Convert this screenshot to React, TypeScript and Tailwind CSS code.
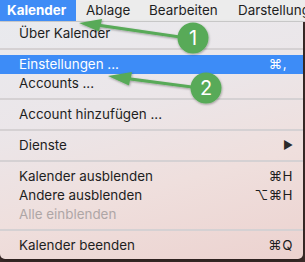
import React from "react";

type Item =
  | { kind: "item"; label: string; shortcut?: string; active?: boolean; disabled?: boolean; submenu?: boolean }
  | { kind: "sep" };

const items: Item[] = [
  { kind: "item", label: "Über Kalender" },
  { kind: "sep" },
  { kind: "item", label: "Einstellungen ...", shortcut: "⌘,", active: true },
  { kind: "item", label: "Accounts ..." },
  { kind: "sep" },
  { kind: "item", label: "Account hinzufügen ..." },
  { kind: "sep" },
  { kind: "item", label: "Dienste", submenu: true },
  { kind: "sep" },
  { kind: "item", label: "Kalender ausblenden", shortcut: "⌘H" },
  { kind: "item", label: "Andere ausblenden", shortcut: "⌥⌘H" },
  { kind: "item", label: "Alle einblenden", disabled: true },
  { kind: "sep" },
  { kind: "item", label: "Kalender beenden", shortcut: "⌘Q" },
];

export default function App() {
  return (
    <div
      className="relative w-[305px] h-[262px] overflow-hidden bg-[#3d2c2a] text-[13.4px] text-[#1e1e1e]"
      style={{ fontFamily: "Inter, 'Liberation Sans', sans-serif" }}
    >
      {/* Menu bar */}
      <div className="flex h-[22px] items-center overflow-hidden bg-[#ececec] border-b border-[#cfcfcf] whitespace-nowrap">
        <div className="flex h-full w-[76px] shrink-0 items-center bg-[#3f8cf6] pl-[7px] font-bold text-white">Kalender</div>
        <div className="w-[73px] shrink-0 pl-[10px]">Ablage</div>
        <div className="w-[89px] shrink-0">Bearbeiten</div>
        <div className="shrink-0">Darstellung</div>
      </div>

      {/* Dropdown */}
      <div className="w-[303px] h-[237px] rounded-b-[5px] bg-[linear-gradient(165deg,#e9eaee_0%,#ebe6e9_35%,#efdfdd_65%,#ecd2cf_100%)] pt-[2px] pb-[3px] shadow-[0_2px_4px_rgba(0,0,0,0.3)]">
        {items.map((it, i) =>
          it.kind === "sep" ? (
            <div key={i} className="flex h-[12px] items-center">
              <div className="h-[2px] w-full bg-[#d5d1d3]" />
            </div>
          ) : (
            <div
              key={i}
              className={
                "flex h-[19px] items-center justify-between pl-[19px] pr-[10px] " +
                (it.active ? "bg-[#3d8cf7] text-white " : "") +
                (it.disabled ? "text-[#aea6a6]" : "")
              }
            >
              <span>{it.label}</span>
              {it.shortcut && (
                <span className={"tracking-[0.5px] " + (it.active ? "mr-[6px]" : "")}>{it.shortcut}</span>
              )}
              {it.submenu && <span className="text-[11px] text-[#2a2a2a]">▶</span>}
            </div>
          )
        )}
      </div>

      {/* Annotation arrows */}
      <svg className="absolute left-0 top-0" width="305" height="262" viewBox="0 0 305 262">
        <defs>
          <filter id="sh" x="-20%" y="-20%" width="140%" height="140%">
            <feDropShadow dx="0.5" dy="1" stdDeviation="1" floodColor="#000" floodOpacity="0.35" />
          </filter>
        </defs>
        <g filter="url(#sh)" fill="#58aa58" stroke="none">
          <path d="M180 35.5 L101 24 L102 19 L79 23 L99 31.5 L100 27 L180 38.5 Z" />
          <circle cx="193" cy="38" r="15.5" />
          <path d="M192 85.5 L131 77.5 L132 72 L108 76 L129 85.5 L130 80.5 L192 88.5 Z" />
          <circle cx="206" cy="88" r="15.5" />
        </g>
        <text x="193" y="45" textAnchor="middle" fill="#fff" fontSize="20" fontFamily="Inter, 'Liberation Sans', sans-serif">1</text>
        <text x="206" y="95" textAnchor="middle" fill="#fff" fontSize="20" fontFamily="Inter, 'Liberation Sans', sans-serif">2</text>
      </svg>
    </div>
  );
}
